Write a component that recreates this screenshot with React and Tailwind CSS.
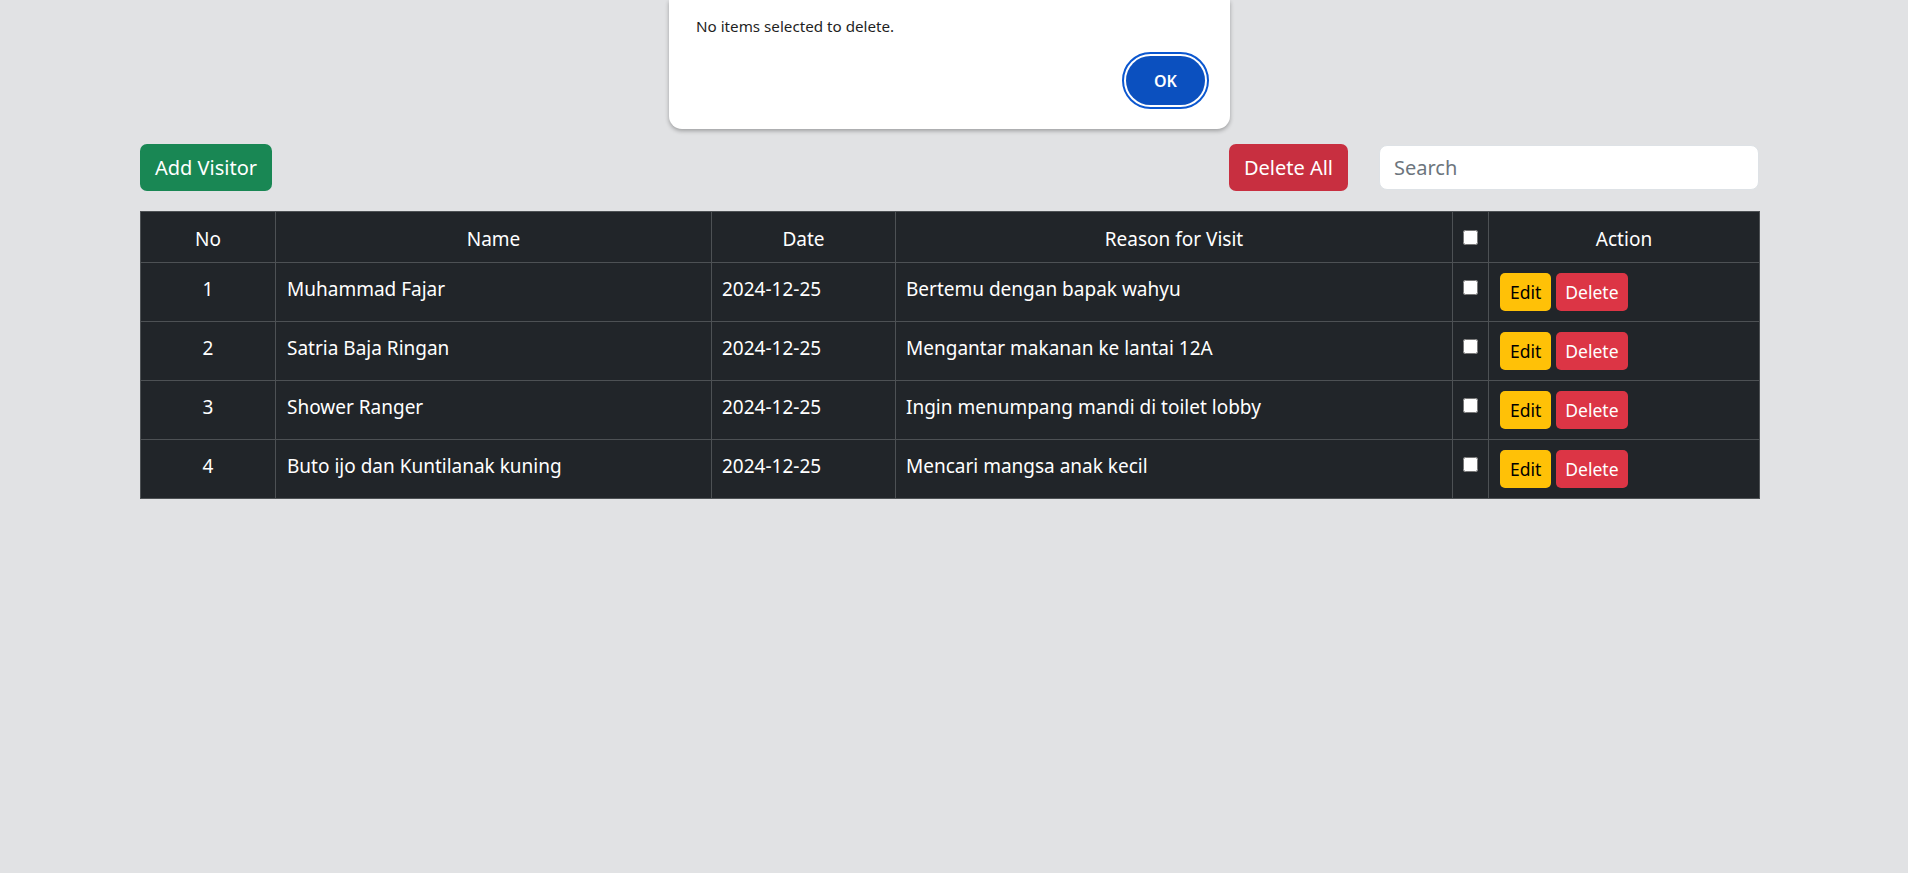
import React from "react";

const visitors = [
  { no: 1, name: "Muhammad Fajar", date: "2024-12-25", reason: "Bertemu dengan bapak wahyu" },
  { no: 2, name: "Satria Baja Ringan", date: "2024-12-25", reason: "Mengantar makanan ke lantai 12A" },
  { no: 3, name: "Shower Ranger", date: "2024-12-25", reason: "Ingin menumpang mandi di toilet lobby" },
  { no: 4, name: "Buto ijo dan Kuntilanak kuning", date: "2024-12-25", reason: "Mencari mangsa anak kecil" },
];

export default function App() {
  const th = "border border-[#4d5154] px-[10px] pt-[12px] pb-[8px] font-normal text-center align-top";
  const td = "border border-[#4d5154] px-[10px] pt-[11px] pb-[9px] align-top";

  return (
    <div
      className="relative min-h-screen bg-[#e1e2e4]"
      style={{ fontFamily: '"Noto Sans", "Open Sans", sans-serif' }}
    >
      {/* alert dialog */}
      <div className="absolute left-[669px] top-0 w-[561px] h-[129px] bg-white rounded-b-[13px] shadow-[0_2px_4px_rgba(0,0,0,0.3)] z-10">
        <p className="absolute left-[27px] top-[15px] text-[15.2px] text-[#1f1f1f]">
          No items selected to delete.
        </p>
        <div className="absolute right-[21px] top-[52px] rounded-full border-2 border-[#0b57d0] p-[2px]">
          <button className="w-[79px] h-[49px] rounded-full bg-[#0b50bf] text-white text-[16px] font-semibold">
            OK
          </button>
        </div>
      </div>

      <div className="ml-[140px] w-[1619px] pt-[144px]">
        <div className="flex items-center justify-between">
          <button className="h-[47px] px-[15px] rounded-[7px] bg-[#198754] text-white text-[20px]">
            Add Visitor
          </button>
          <div className="flex items-center gap-[31px]">
            <button className="h-[47px] px-[15px] rounded-[7px] bg-[#c82f40] text-white text-[20px]">
              Delete All
            </button>
            <input
              type="text"
              placeholder="Search"
              className="w-[380px] h-[45px] px-[14px] rounded-[8px] bg-white border border-[#dee2e6] text-[20px] placeholder:text-[#6c757d] outline-none"
            />
          </div>
        </div>

        <table className="mt-[20px] w-full table-fixed border-collapse bg-[#212529] text-white text-[19px] leading-[30px]">
          <colgroup>
            <col className="w-[135px]" />
            <col className="w-[436px]" />
            <col className="w-[184px]" />
            <col className="w-[557px]" />
            <col className="w-[36px]" />
            <col className="w-[271px]" />
          </colgroup>
          <thead>
            <tr>
              <th className={th}>No</th>
              <th className={th}>Name</th>
              <th className={th}>Date</th>
              <th className={th}>Reason for Visit</th>
              <th className="border border-[#4d5154] px-[10px] py-[10px] text-left align-top">
                <input type="checkbox" className="w-[15px] h-[15px] m-0 align-[-1px]" />
              </th>
              <th className={th}>Action</th>
            </tr>
          </thead>
          <tbody>
            {visitors.map((v) => (
              <tr key={v.no}>
                <td className={td + " text-center"}>{v.no}</td>
                <td className={td + " pl-[11px]"}>{v.name}</td>
                <td className={td}>{v.date}</td>
                <td className={td}>{v.reason}</td>
                <td className="border border-[#4d5154] px-[10px] py-[10px] align-top">
                  <input type="checkbox" className="w-[15px] h-[15px] m-0 align-[0px]" />
                </td>
                <td className="border border-[#4d5154] px-[11px] py-[10px] align-top">
                  <div className="flex gap-[5px]">
                    <button className="h-[38px] px-[10px] rounded-[5px] bg-[#ffc107] text-black text-[17.5px]">
                      Edit
                    </button>
                    <button className="h-[38px] px-[9px] rounded-[5px] bg-[#dc3545] text-white text-[17.5px]">
                      Delete
                    </button>
                  </div>
                </td>
              </tr>
            ))}
          </tbody>
        </table>
      </div>
    </div>
  );
}
